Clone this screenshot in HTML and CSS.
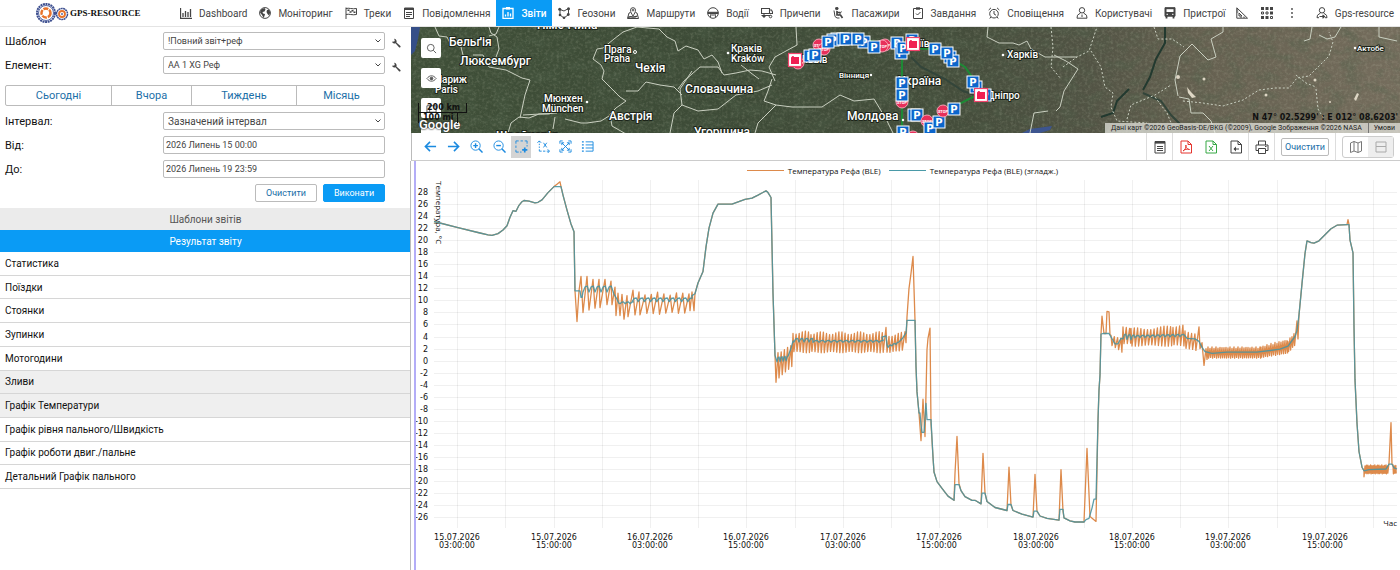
FILE: index.html
```html
<!DOCTYPE html>
<html lang="uk">
<head>
  <meta charset="UTF-8" />
  <meta name="viewport" content="width=device-width, initial-scale=1.0" />
  <title>GPS-RESOURCE - Звіти</title>
  <link rel="stylesheet" href="styles.css">
</head>
<body>
  <header class="topbar">
    <a class="logo" href="#">
      <svg width="34" height="22" viewBox="0 0 34 22" fill="none">
        <circle cx="11" cy="11" r="9" stroke="#3d4f8f" stroke-width="2" stroke-dasharray="2 .6"/>
        <circle cx="11" cy="11" r="7.500" stroke="#5a6aa5" stroke-width="1"/>
        <circle cx="11" cy="11" r="4.500" stroke="#e8732c" stroke-width="2.500" stroke-dasharray="5 1"/>
        <circle cx="27" cy="12" r="5.500" stroke="#3d4f8f" stroke-width="1.500" stroke-dasharray="2 .4"/>
        <circle cx="27" cy="12" r="3" stroke="#e8732c" stroke-width="1.800"/>
        <circle cx="27" cy="12" r="1" fill="#5a6aa5"/>
      </svg>
      <span>GPS-RESOURCE</span>
    </a>
    <nav class="menu">
      <a href="#"><svg class="ico" viewBox="0 0 12 12"><path d="M.5 1v10.500H12M3 10V6M5.500 10V4M8 10V5M10.500 10V2" stroke-width="1.300"/></svg>Dashboard</a>
      <a href="#"><svg class="ico" viewBox="0 0 12 12"><circle cx="6" cy="6" r="5.400"/><path d="M2 2.500 5.500 1l1 1.500-1 2-2 .5.5 1.500 2 .5-.5 2L4.500 11 3 8 1 5.500zM8 3l2-.5 1.300 3L10 8.500 8.500 7 7.500 5z" fill="#444" stroke="none"/></svg>Моніторинг</a>
      <a href="#"><svg class="ico" viewBox="0 0 12 12"><path d="M1 .5V12M1 1.500c3-1 6 1 10.500 0v6C7 8.500 4 6.500 1 7.500"/><path d="M2.500 2.500h2v1.500h-2zM6.500 3h2v1.500h-2zM4.500 4.300h2v1.500h-2zM8.500 4.500h2V6h-2z" fill="#444" stroke="none"/></svg>Треки</a>
      <a href="#"><svg class="ico" viewBox="0 0 12 12"><path d="M1.500 1h9v10.500h-9z"/><path d="M1.500 2h9" stroke-width="2"/><path d="M3 5.500h6M3 7.500h6M3 9.500h4"/></svg>Повідомлення</a>
      <a href="#" class="active"><svg class="ico" viewBox="0 0 12 12"><path d="M1 1.500h10v10H1z" stroke-width="1.300"/><path d="M4 0h4v2.500H4z" fill="#fff" stroke="none"/><path d="M3.500 9.500v-2M6 9.500V5M8.500 9.500V6.500" stroke-width="1.300"/></svg>Звіти</a>
      <a href="#"><svg class="ico" viewBox="0 0 12 12"><path d="M2 2.500 6 4l4.500-2.500v6L6 11 2 8z"/><g fill="#444" stroke="none"><circle cx="1.700" cy="2.200" r="1.500"/><circle cx="10.500" cy="1.700" r="1.500"/><circle cx="10.300" cy="7.500" r="1.400"/><circle cx="6" cy="10.700" r="1.300"/><circle cx="2" cy="8" r="1.300"/></g></svg>Геозони</a>
      <a href="#"><svg class="ico" viewBox="0 0 12 12"><path d="M3.500 5.500 2 6 .5 11.500h11L10 6l-1.500-.5"/><path d="M6 9C4.500 6.500 3.500 5 3.500 3.200a2.500 2.500 0 0 1 5 0C8.500 5 7.500 6.500 6 9z"/><path d="M1 10.500c3-2 6 1 9-1.500" stroke-width="1.500"/><circle cx="6" cy="3.200" r=".8"/></svg>Маршрути</a>
      <a href="#"><svg class="ico" viewBox="0 0 12 12"><circle cx="6" cy="6" r="5.300"/><path d="M1 5.300h10v1.200H1z" fill="#444"/><path d="M4 6.500 3.500 10M8 6.500 8.500 10M4.500 8h3"/></svg>Водії</a>
      <a href="#"><svg class="ico" viewBox="0 0 12 12"><path d="M.5 1.500h8v5h-8zM8.500 3h2l1 2v1.500h-3M.5 8.500h9" stroke-width="1.100"/><circle cx="3" cy="9" r="1.200" fill="#444"/><circle cx="9.500" cy="9.500" r="1.300"/></svg>Причепи</a>
      <a href="#"><svg class="ico" viewBox="0 0 12 12"><circle cx="3.800" cy="1.500" r="1.300" fill="#444"/><path d="M4 4v4h3.500l2 3M4.500 5.500h3" stroke-width="1.700"/><path d="M1 3.500 2 9.500 4 11h2.500M8.500 4.500l-3 4"/></svg>Пасажири</a>
      <a href="#"><svg class="ico" viewBox="0 0 12 12"><path d="M1.500 1.500h9v10h-9zM4 6.500 5.500 8 8.500 5"/><path d="M4 .3h4v2.400H4z" fill="#444" stroke="none"/></svg>Завдання</a>
      <a href="#"><svg class="ico" viewBox="0 0 12 12"><circle cx="6" cy="6.700" r="4.300"/><path d="M6 4v3l2 1.200M.7 3 3 .8M11.300 3 9 .8M2.800 10 1.800 11.500M9.200 10l1 1.500"/></svg>Сповіщення</a>
      <a href="#"><svg class="ico" viewBox="0 0 12 12"><circle cx="6" cy="3.300" r="2.700"/><path d="M4.500 6 1.500 8.200l-.5 3h10l-.5-3L7.500 6M6 7.500v2.500"/></svg>Користувачі</a>
      <a href="#"><svg class="ico" viewBox="0 0 12 12"><path d="M1 .7h10v8.500H1z" fill="#444"/><path d="M2.500 2.200h7V5h-7z" fill="#fff" stroke="none"/><path d="M2.500 9v2.500M9.500 9v2.500" stroke-width="1.800"/><path d="M2.500 7.300h1.500M8 7.300h1.500" stroke="#fff"/></svg>Пристрої</a>
    </nav>
    <div class="tools">
      <button type="button" aria-label="Інструменти"><svg class="ico" viewBox="0 0 12 12"><path d="M.8.800v10.400h10.700zM3 6v3h3z"/><path d="M.8 3h1.500M.8 5h1.500M5 11V9.500M8 11V9.500"/></svg></button>
      <button type="button" aria-label="Додатки"><svg class="ico" viewBox="0 0 12 12"><g fill="#444" stroke="none"><path d="M0 0h3v3H0zM4.500 0h3v3h-3zM9 0h3v3H9zM9 4.500h3v3H9zM0 9h3v3H0zM4.500 9h3v3h-3z"/></g><path d="M.5 5h2v2h-2zM5 5h2v2H5zM9.500 9.500h2v2h-2z"/></svg></button>
      <button type="button" aria-label="Ще"><svg class="ico" viewBox="0 0 12 12"><g fill="#444" stroke="none"><circle cx="6" cy="2" r=".9"/><circle cx="6" cy="6" r=".9"/><circle cx="6" cy="10" r=".9"/></g></svg></button>
    </div>
    <a class="account" href="#"><svg class="ico" viewBox="0 0 12 12"><circle cx="6" cy="3.300" r="2.700"/><path d="M4.500 6 1.500 8.200l-.5 2.500h2M7.500 6l3 2.200.5 2.500H9"/><path d="M3.500 9.500h5M6.500 8l2 1.500-2 1.800" stroke-width="1.200"/></svg>Gps-resource</a>
  </header>

  <div class="layout">
    <aside class="sidebar">
      <form class="report-form">
        <div class="field">
          <label for="template">Шаблон</label>
          <div class="select">
            <select id="template"><option>!Повний звіт+реф</option></select>
            <svg viewBox="0 0 8 8"><path d="M1.500 2.500 4 5l2.500-2.500"/></svg>
          </div>
          <button type="button" class="wrench" aria-label="Налаштувати шаблон"><svg viewBox="0 0 10 10"><path d="M1 3.800A2.600 2.600 0 0 0 4.500 5.200L8 9.300a1 1 0 0 0 1.400-1.400L5.400 4.500A2.600 2.600 0 0 0 3 .8l.8 1.500-.5 1.200z"/></svg></button>
        </div>
        <div class="field">
          <label for="unit">Елемент:</label>
          <div class="select">
            <select id="unit"><option>АА 1 XG Реф</option></select>
            <svg viewBox="0 0 8 8"><path d="M1.500 2.500 4 5l2.500-2.500"/></svg>
          </div>
          <button type="button" class="wrench" aria-label="Налаштувати елемент"><svg viewBox="0 0 10 10"><path d="M1 3.800A2.600 2.600 0 0 0 4.500 5.200L8 9.300a1 1 0 0 0 1.400-1.400L5.400 4.500A2.600 2.600 0 0 0 3 .8l.8 1.500-.5 1.200z"/></svg></button>
        </div>
        <div class="periods">
          <button type="button">Сьогодні</button>
          <button type="button">Вчора</button>
          <button type="button">Тиждень</button>
          <button type="button">Місяць</button>
        </div>
        <div class="field">
          <label for="interval">Інтервал:</label>
          <div class="select">
            <select id="interval"><option>Зазначений інтервал</option></select>
            <svg viewBox="0 0 8 8"><path d="M1.500 2.500 4 5l2.500-2.500"/></svg>
          </div>
        </div>
        <div class="field">
          <label for="from">Від:</label>
          <input type="text" id="from" value="2026 Липень 15 00:00" />
        </div>
        <div class="field">
          <label for="to">До:</label>
          <input type="text" id="to" value="2026 Липень 19 23:59" />
        </div>
        <div class="actions">
          <button type="reset" class="btn">Очистити</button>
          <button type="button" class="btn primary">Виконати</button>
        </div>
      </form>
      <button type="button" class="section">Шаблони звітів</button>
      <button type="button" class="section current">Результат звіту</button>
      <ul class="results">
        <li><a href="#">Статистика</a></li>
        <li><a href="#">Поїздки</a></li>
        <li><a href="#">Стоянки</a></li>
        <li><a href="#">Зупинки</a></li>
        <li><a href="#">Мотогодини</a></li>
        <li class="on"><a href="#">Зливи</a></li>
        <li class="on"><a href="#">Графік Температури</a></li>
        <li><a href="#">Графік рівня пального/Швидкість</a></li>
        <li><a href="#">Графік роботи двиг./пальне</a></li>
        <li><a href="#">Детальний Графік пального</a></li>
      </ul>
    </aside>

    <main class="content">
      <div class="map">
        <svg class="map-canvas" viewBox="0 0 989 106" preserveAspectRatio="xMidYMid slice">
          <defs>
            <linearGradient id="land">
              <stop offset="0" stop-color="#3f4f38"/>
              <stop offset=".3" stop-color="#3d4b37"/>
              <stop offset=".55" stop-color="#444d3b"/>
              <stop offset=".68" stop-color="#515344"/>
              <stop offset=".8" stop-color="#666151"/>
              <stop offset="1" stop-color="#756d5d"/>
            </linearGradient>
            <filter id="relief" x="0" y="0" width="100%" height="100%">
              <feTurbulence type="fractalNoise" baseFrequency=".06 .09" numOctaves="5" seed="8"/>
              <feColorMatrix values="0 0 0 0 .08  0 0 0 0 .12  0 0 0 0 .07  1.800 0 0 0 -.72"/>
            </filter>
            <filter id="grain" x="0" y="0" width="100%" height="100%">
              <feTurbulence type="fractalNoise" baseFrequency=".35" numOctaves="3" seed="3"/>
              <feColorMatrix values="0 0 0 0 .7  0 0 0 0 .72  0 0 0 0 .55  0 1.200 0 0 -.52"/>
            </filter>
            <g id="park">
              <rect x="-6" y="-6" width="12" height="12" fill="#0b66cc" stroke="#fff" stroke-width="1"/>
              <text class="park" x="0" y="4">P</text>
            </g>
            <g id="stop">
              <circle r="6" fill="#e8305a" stroke="#f7a0b4"/>
              <text class="stop" x="0" y="2">STOP</text>
            </g>
            <g id="fuel">
              <rect x="-6.500" y="-6.500" width="13" height="13" fill="#fff" stroke="#f2446c" stroke-width="1.200"/>
              <path d="M-4-2.500-2.500-4h1l.5 1H4v7h-8z" fill="#f01f52"/>
            </g>
          </defs>
          <rect width="989" height="106" fill="url(#land)"/>
          <rect width="989" height="106" filter="url(#relief)" opacity=".5"/>
          <rect width="989" height="106" filter="url(#grain)" opacity=".3"/>
          <path d="M0 0h9L7 12 4 24 0 28z" fill="#354f88"/>
          <path d="M611 106l8-4 22-3-2 4-10 3z" fill="#3d558f"/>
          <path class="river" d="M754 0v16l-9 16-6 18-7 13M718 62l-12 12-4 12-12 4"/>
          <path class="river faint" d="M500 30l10 10 24 12 18 12 12 4M732 66l18 8 10 14 14 14"/>
          <g fill="#ddd6c4"><circle cx="767" cy="50" r="2"/><circle cx="793" cy="52" r="1.500"/><circle cx="904" cy="53" r="1.500"/><path d="M776 60l4 5 5 5-4 1-4-5zM943 72l3-6 2 1-3 7z"/><circle cx="855" cy="68" r="1.500"/><circle cx="919" cy="75" r="1"/></g>
          <g class="border">
            <path d="M24 0l4 9 8 1 4 8M78 0l2 6 6 4 2 12-3 8M88 0l-3 7-7 2M50 20l2 8M62 28l10 0 6 12 17 3 16 8 8 2-5 15-3 14-2 9"/>
            <path d="M108 90l10 1 10-4 10 0 6-2M108 90l-8 6-3 10M144 90l-2 12M154 92l16 4 6 0 14-2 8-5M112 88l34-2"/>
            <path d="M212 5l-9 7-11 9-6 1-4 10 8 6 3 6-2 8 8 8 10 10 6 4-10 7-6 6 2 12 14 8"/>
            <path d="M212 5l14-5 22 2 8 8 8 4 3 10 8-5 12 4 6 9 8-4 6 7 4 11M215 64l12 0 8-9 14 3 14 2 8 8M267 62l6-8 16-14 18 0 6 8 12-2 14-3 12 1 14 4"/>
            <path d="M271 78l-2-16 12-18M271 78l-8 8-4 20M271 78l16 6 20-2 18-14 22-4 14-6M330 38l10 8 8 6M364 54l-6-14 6-10 22-12-1-18M361 52l-4 12-4 10 12 4-10 10-8 8-3 10M365 78l16 2 30 0 18-12 14 6 20-2 12 20 7 14"/>
            <path d="M577 0l-1 10 12 6 14 0 6 2 8-4 4 8 14 8 20 0 12 0M645 84l4-4 4-16 14-22-12-8-12-6M637 84l-14 2-4 20"/>
            <path d="M767 69l-3-16 5-24 12-12 16 16 8-3-5-18 12-7V0M768 70l10 2 2 14 12 0 8 8 4 12M901 0l-2 12-6 2M968 0v10l18 4M908 8l8 4 8-2 6-10"/>
          </g>
          <g class="border dotted">
            <path d="M640 0l2 20-2 20 10 12M652 40l14-10 12-6 8-24M680 24l10 16 4 20 8 6-2 14 6 14 30 2"/>
            <path d="M743 0l4 12 14 0 12 8M716 92l4-14 24-10 16-10M744 70l12 16 4 10M772 74l20 2 20 3 20-6 16-10 16-2 14 0 8-10 12-2 20-20 4-14-4-10M885 48l10 8 10 4M905 62l2 20 6 10"/>
          </g>
          <path class="track" d="M384 33l20-5 14-13 30-4 42 10 34 1 20 12 10 6 10 14 6 12-28 14-14 12-14 6M491 24v80"/>
          <g class="place big">
            <text x="126" y="2">Німеччина</text>
            <text x="38" y="19">Бельґія</text>
            <text x="49" y="38">Люксембург</text>
            <text x="224" y="45">Чехія</text>
            <text x="198" y="93">Австрія</text>
            <text x="274" y="66">Словаччина</text>
            <text x="283" y="109">Угорщина</text>
            <text x="85" y="113">Швейцарія</text>
            <text x="487" y="58">Україна</text>
            <text x="436" y="93">Молдова</text>
          </g>
          <g class="place">
            <text x="24" y="56">Париж</text>
            <text x="24" y="66">Paris</text>
            <text x="193" y="26">Прага</text>
            <text x="193" y="35">Praha</text>
            <text x="133" y="75">Мюнхен</text>
            <text x="131" y="85">München</text>
            <text x="320" y="25">Краків</text>
            <text x="320" y="35">Kraków</text>
            <text x="390" y="36">Львів</text>
            <text x="498" y="20">Київ</text>
            <text x="596" y="31">Харків</text>
            <text x="576" y="72">Дніпро</text>
          </g>
          <g class="place small">
            <text x="428" y="51">Вінниця</text>
            <text x="946" y="24">Актобе</text>
          </g>
          <g fill="#fff"><circle cx="224" cy="25" r="1.500" fill="none" stroke="#fff"/><circle cx="176" cy="75" r="1.300"/><circle cx="317" cy="26" r="1.300"/><circle cx="460" cy="48" r="1.200"/><circle cx="592" cy="28" r="1.300"/><circle cx="944" cy="21" r="1.200"/><circle cx="492" cy="93" r="1.200"/></g>
          <use href="#stop" x="387" y="36"/><use href="#fuel" x="384" y="33"/>
          <use href="#stop" x="408" y="18"/><use href="#stop" x="413" y="22"/>
          <use href="#park" x="399" y="29"/><use href="#park" x="404" y="28"/>
          <use href="#park" x="426" y="12"/><use href="#park" x="422" y="13"/><use href="#park" x="417" y="15"/>
          <use href="#park" x="432" y="12"/><use href="#park" x="435" y="12"/>
          <use href="#park" x="453" y="15"/><use href="#park" x="447" y="12"/>
          <use href="#stop" x="474" y="18"/><use href="#stop" x="471" y="19"/><use href="#park" x="463" y="20"/>
          <use href="#park" x="486" y="16"/><use href="#park" x="490" y="26"/><use href="#park" x="492" y="21"/>
          <use href="#park" x="501" y="13"/><use href="#fuel" x="502" y="17"/>
          <use href="#park" x="524" y="22"/><use href="#park" x="539" y="30"/><use href="#park" x="542" y="34"/><use href="#park" x="536" y="26"/>
          <use href="#park" x="565" y="60"/><use href="#park" x="562" y="55"/>
          <use href="#park" x="574" y="68"/><use href="#fuel" x="570" y="68"/>
          <use href="#stop" x="491" y="75"/><use href="#park" x="491" y="56"/><use href="#park" x="491" y="68"/>
          <use href="#park" x="503" y="88"/><use href="#park" x="506" y="88"/>
          <use href="#stop" x="516" y="94"/><use href="#park" x="519" y="101"/><use href="#park" x="528" y="95"/>
          <use href="#stop" x="532" y="84"/><use href="#park" x="543" y="82"/>
          <use href="#stop" x="502" y="110"/><use href="#park" x="492" y="105"/>
        </svg>
        <div class="map-controls">
          <button type="button" aria-label="Пошук"><svg viewBox="0 0 12 12"><circle cx="5.200" cy="5.200" r="3.700"/><path d="M8 8l3 3"/></svg></button>
          <button type="button" aria-label="Видимість"><svg viewBox="0 0 12 12"><path d="M1 6c3-4 7-4 10 0-3 4-7 4-10 0z"/><circle cx="6" cy="6" r="1.500" fill="#555"/></svg></button>
          <button type="button" aria-label="Шари"><svg viewBox="0 0 12 12"><path d="M1 3h10v7H1zM4 3v7"/></svg></button>
          <button type="button" aria-label="Збільшити"><svg viewBox="0 0 12 12"><path d="M6 1v10M1 6h10"/></svg></button>
        </div>
        <span class="google">Google</span>
        <div class="scale"><span class="km">200 km</span><span class="mi">100 mi</span></div>
        <div class="cursor-pos">N 47° 02.5299' : E 012° 08.6203'</div>
        <div class="copyright"><span>Дані карт ©2026 GeoBasis-DE/BKG (©2009), Google Зображення ©2026 NASA</span><a href="#">Умови</a></div>
      </div>

      <div class="toolbar">
        <div class="zoomers">
          <div class="group">
            <button type="button" aria-label="Назад"><svg viewBox="0 0 14 14"><path d="M13 7H2M6.500 2 1.500 7l5 5" stroke-width="1.700"/></svg></button>
            <button type="button" aria-label="Вперед"><svg viewBox="0 0 14 14"><path d="M1 7h11M7.500 2l5 5-5 5" stroke-width="1.700"/></svg></button>
            <button type="button" aria-label="Наблизити"><svg viewBox="0 0 14 14"><circle cx="6" cy="6" r="5"/><path d="M9.500 9.500 13.500 13.500" stroke-width="1.600"/><path d="M3.500 6h5M6 3.500v5" stroke-width="1.500"/></svg></button>
            <button type="button" aria-label="Віддалити"><svg viewBox="0 0 14 14"><circle cx="6" cy="6" r="5"/><path d="M9.500 9.500 13.500 13.500" stroke-width="1.600"/><path d="M3.500 6h5" stroke-width="1.500"/></svg></button>
          </div>
          <div class="group">
            <button type="button" class="pressed" aria-label="Виділення"><svg viewBox="0 0 14 14"><path d="M1 4V1h3M6 1h2.500M10.500 1H13v3M13 5.500V7M1 6v2.500M1 10.500V13h3M5.500 13H7"/><path d="M10.500 8v5.500M7.700 10.700h5.600" stroke-width="1.800"/></svg></button>
            <button type="button" aria-label="Вісь X"><svg viewBox="0 0 14 14"><path d="M2.500 1v1.500M2.500 4v1.500M2.500 7v1.500M2.500 10v2H5M6.500 12H9M10.500 12H13M.5 3l2-2 2 2M11.500 10l2 2-2 2M7 3l3.500 5M10.500 3 7 8"/></svg></button>
          </div>
          <div class="group">
            <button type="button" aria-label="На весь екран"><svg viewBox="0 0 14 14"><path d="M1 4V1h3M10 1h3v3M13 10v3h-3M4 13H1v-3"/><path d="M3 3l8 8M11 3l-8 8M3 5.500V3h2.500M8.500 3H11v2.500M11 8.500V11H8.500M5.500 11H3V8.500"/></svg></button>
            <button type="button" aria-label="Легенда"><svg viewBox="0 0 14 14"><path d="M5 2h8M5 5.300h8M5 8.600h8M5 12h8M13 2v10"/><path d="M1 2h2M1 5.300h2M1 8.600h2M1 12h2" stroke-width="1.500"/></svg></button>
          </div>
        </div>
        <div class="cell"><button type="button" aria-label="Таблиця"><svg viewBox="0 0 14 14"><path d="M2 1.500h10v11.500H2z"/><path d="M2 2.500h10" stroke-width="2.200"/><path d="M4 6.500h6M4 8.500h6M4 10.500h6"/></svg></button></div>
        <div class="cell">
          <button type="button" class="red" aria-label="PDF"><svg viewBox="0 0 14 14"><path d="M2 1h7l3.500 3.500V13H2zM9 1v3.500h3.500M4 11c2-1 3.500-4 3-6-1 1 1 4.500 3.500 4.500C8 8.500 5.500 9.500 4 11z"/></svg></button>
          <button type="button" class="green" aria-label="Excel"><svg viewBox="0 0 14 14"><path d="M2 1h7l3.500 3.500V13H2zM9 1v3.500h3.500M5 6l4 5M9 6l-4 5"/></svg></button>
          <button type="button" aria-label="Експорт"><svg viewBox="0 0 14 14"><path d="M9 1H2v12h10.500V4.500L9 1v3.500h3.500M10 9H5"/><path d="M7 6.500 4.500 9 7 11.500z" fill="#444" stroke="none"/></svg></button>
        </div>
        <div class="cell"><button type="button" aria-label="Друк"><svg viewBox="0 0 14 14"><path d="M3.500 5V1h7v4M3.500 10.500H1V5h12v5.500h-2.500M3.500 8.500h7v5h-7zM10 6.500h1.500"/></svg></button></div>
        <div class="cell wide"><button type="button" class="btn">Очистити</button></div>
        <div class="cell wide">
          <div class="switch">
            <button type="button" aria-label="Карта"><svg viewBox="0 0 14 14"><path d="M1.500 3 5 1.500 9 3l3.500-1.500V11L9 12.500 5 11l-3.500 1.500zM5 1.500V11M9 3v9.500"/></svg></button>
            <button type="button" class="pressed" aria-label="Розділити"><svg viewBox="0 0 14 14"><path d="M2 2h10v4.500H2zM2 6.500h10V12H2z"/></svg></button>
          </div>
        </div>
      </div>

      <section class="chart">
        <div class="legend">
          <span><i class="line raw"></i>Температура Рефа (BLE)</span>
          <span><i class="line smooth"></i>Температура Рефа (BLE) (згладж.)</span>
        </div>
        <div class="plot" id="plot"></div>
      </section>
    </main>
  </div>
  <script src="chart.js"></script>
</body>
</html>
```
FILE: styles.css
```css
* {
  box-sizing: border-box;
}
body {
  margin: 0;
  min-height: 100vh;
  display: flex;
  flex-direction: column;
  font-family: Roboto, "Liberation Sans", sans-serif;
  font-size: 10px;
  color: #222;
  background: #fff;
}
button,
input,
select {
  font-family: inherit;
  font-size: 9px;
  margin: 0;
}
button {
  padding: 0;
  border: 0;
  background: none;
  cursor: pointer;
}
a {
  color: inherit;
  text-decoration: none;
}
svg {
  display: block;
  fill: none;
}

/* top bar */
.topbar {
  display: flex;
  align-items: stretch;
  height: 27px;
  border-bottom: 1px solid #e4e4e4;
  color: #444;
  white-space: nowrap;
}
.logo {
  display: flex;
  flex-shrink: 0;
  align-items: center;
  gap: 1px;
  width: 174px;
  padding-left: 35px;
  font-family: "Liberation Serif", serif;
  font-weight: bold;
  font-size: 9px;
  color: #111;
}
.menu {
  display: flex;
}
.menu a,
.account {
  display: flex;
  align-items: center;
  gap: 7px;
  padding: 0 6px;
}
.menu .active {
  background: #0a9bf5;
  color: #fff;
  font-weight: 500;
}
.ico {
  width: 12px;
  height: 12px;
  stroke: #444;
}
.active .ico {
  stroke: #fff;
}
.tools {
  display: flex;
  align-items: center;
  gap: 13px;
  padding: 0 4px;
}
.account {
  margin-left: auto;
}

.layout {
  flex: 1;
  display: grid;
  grid-template-columns: 411px minmax(0, 1fr);
}

/* sidebar */
.report-form {
  display: flex;
  flex-direction: column;
  gap: 6px;
  padding: 5px 5px 6px;
}
.field {
  display: grid;
  grid-template-columns: 158px 222px 16px;
  align-items: center;
}
.field label {
  color: #111;
  font-size: 11px;
}
.select {
  position: relative;
}
.select select,
.field input {
  display: block;
  width: 100%;
  height: 18px;
  padding: 0 4px;
  border: 1px solid #bbb;
  border-radius: 2px;
  background: #fff;
  color: #444;
  appearance: none;
}
.select #interval {
  font-size: 10px;
}
.field input {
  padding: 0 2px;
}
.select svg {
  position: absolute;
  right: 3px;
  top: 5px;
  width: 8px;
  height: 8px;
  stroke: #444;
}
.wrench {
  justify-self: end;
  margin-top: 3px;
}
.wrench svg {
  width: 10px;
  height: 10px;
  fill: #444;
}
.periods {
  display: grid;
  grid-template-columns: 105px 80px 105px 90px;
  width: 380px;
  margin: 5px 0 0;
  border: 1px solid #bbb;
  border-radius: 2px;
}
.periods button {
  height: 19px;
  font-size: 11px;
  color: #1b6fa8;
}
.periods button + button {
  border-left: 1px solid #bbb;
}
.actions {
  display: flex;
  justify-content: flex-end;
  gap: 6px;
  padding-right: 21px;
}
.btn {
  height: 18px;
  border: 1px solid #bbb;
  border-radius: 2px;
  background: #fff;
  color: #1b6fa8;
}
.actions .btn {
  width: 62px;
}
.actions .primary {
  border-color: #0a9bf5;
  background: #0a9bf5;
  color: #fff;
}
.section {
  display: block;
  width: 100%;
  height: 22px;
  background: #ebebeb;
  color: #555;
  font-size: 10px;
}
.section.current {
  background: #0a9bf5;
  color: #fff;
}
.results {
  display: grid;
  grid-auto-rows: 1fr;
  height: 237px;
  margin: 0;
  padding: 0;
  list-style: none;
}
.results li {
  display: flex;
  align-items: center;
  padding: 0 5px;
  border-bottom: 1px solid #d6d6d6;
  color: #111;
}
.results .on {
  background: #efefef;
}

/* map */
.content {
  display: flex;
  flex-direction: column;
}
.map {
  position: relative;
  height: 106px;
  overflow: hidden;
}
.map-canvas {
  width: 100%;
  height: 100%;
}
.border {
  stroke: #c9cfc0;
  stroke-width: 1;
  stroke-linejoin: round;
}
.dotted {
  stroke-dasharray: 2 2;
}
.river {
  stroke: #22392f;
  stroke-width: 2;
}
.faint {
  stroke: #33453a;
}
.track {
  stroke: #1d8a35;
  stroke-width: 2;
}
.place {
  font-size: 10px;
  font-weight: 500;
  fill: #fff;
  stroke: #1c2419;
  stroke-width: 2px;
  stroke-linejoin: round;
  paint-order: stroke;
}
.big {
  font-size: 12px;
}
.small {
  font-size: 8px;
}
.park {
  font: bold 10px "DejaVu Sans", sans-serif;
  fill: #fff;
  text-anchor: middle;
}
.stop {
  font: bold 4px Roboto, sans-serif;
  fill: #fff;
  text-anchor: middle;
}
.map-controls {
  position: absolute;
  left: 10px;
  top: 11px;
  display: grid;
  gap: 10px;
}
.map-controls button {
  display: grid;
  place-items: center;
  width: 20px;
  height: 20px;
  border-radius: 2px;
  background: #fff;
}
.map-controls svg {
  width: 11px;
  height: 11px;
  stroke: #555;
}
.google {
  position: absolute;
  left: 8px;
  bottom: 1px;
  font-size: 13px;
  line-height: 14px;
  font-weight: 500;
  color: #fff;
  text-shadow: 0 0 2px #333, 0 0 2px #333;
}
.scale {
  position: absolute;
  left: 7px;
  top: 76px;
  width: 49px;
  font: bold 8px/10px "DejaVu Sans", sans-serif;
  color: #111;
}
.scale span {
  display: block;
  height: 10px;
  padding-left: 8px;
  border: solid #111;
  border-width: 0 1px;
}
.scale .km {
  border-bottom-width: 1px;
}
.scale .mi {
  width: 40px;
  padding-left: 4px;
}
.cursor-pos {
  position: absolute;
  right: 2px;
  top: 86px;
  font: bold 8px/10px "DejaVu Sans", sans-serif;
  color: #111;
}
.copyright {
  position: absolute;
  right: 0;
  bottom: 0;
  display: flex;
  height: 10px;
  font-size: 7px;
  line-height: 10px;
  color: #222;
  background: rgba(235, 235, 230, 0.7);
}
.copyright span {
  padding: 0 6px;
  border-right: 1px solid #777;
}
.copyright a {
  padding: 0 5px;
}

/* report toolbar */
.toolbar {
  display: flex;
  height: 28px;
  border-bottom: 1px solid #ccc;
  border-left: 1px solid #bbb;
}
.zoomers {
  flex: 1;
  display: flex;
  align-items: center;
  gap: 2px;
  padding-left: 8px;
}
.group {
  display: flex;
  gap: 2px;
}
.group:first-child {
  gap: 3px;
}
.group button,
.cell button {
  display: grid;
  place-items: center;
}
.group button {
  width: 20px;
  height: 22px;
}
.group svg {
  width: 13px;
  height: 13px;
  stroke: #1b8ae0;
}
.group .pressed {
  background: #d4d4d4;
}
.cell {
  display: flex;
  align-items: center;
  border-left: 1px solid #ddd;
}
.cell > button {
  width: 25px;
  height: 27px;
}
.cell svg {
  width: 14px;
  height: 14px;
  stroke: #444;
}
.cell .red svg {
  stroke: #e5352e;
}
.cell .green svg {
  stroke: #36a845;
}
.cell.wide {
  padding: 0 6px;
}
.wide > .btn {
  width: 48px;
  height: 18px;
}
.switch {
  display: flex;
  border: 1px solid #ccc;
  border-radius: 3px;
}
.switch button {
  width: 25px;
  height: 20px;
}
.switch .pressed {
  background: #eee;
}
.switch svg {
  stroke: #777;
}
.switch .pressed svg {
  stroke: #aaa;
}

/* chart */
.chart {
  flex: 1;
  display: flex;
  flex-direction: column;
  margin-left: 3px;
  border-left: 2px solid #b3adf7;
  box-shadow: -3px 0 0 #fff, -4px 0 0 #bbb;
  font-family: "DejaVu Sans", sans-serif;
  font-size: 8px;
  color: #111;
}
.legend {
  display: flex;
  justify-content: center;
  gap: 8px;
  height: 19px;
  padding-right: 11px;
  font-family: "Open Sans", "Noto Sans", sans-serif;
  font-weight: 500;
  line-height: 18px;
}
.legend span {
  display: flex;
  align-items: center;
  gap: 4px;
}
.line {
  width: 37px;
  height: 1px;
}
.line.raw {
  background: #dd8a4b;
}
.line.smooth {
  background: #4a9aa8;
}
.plot {
  flex: 1;
  min-height: 390px;
}
.plot text {
  fill: #111;
}
.plot .title {
  font-family: "Open Sans", "Noto Sans", sans-serif;
  font-weight: 500;
}
.grid {
  stroke: #000;
  stroke-opacity: 0.06;
}
.series {
  stroke-width: 1.3px;
  stroke-linejoin: round;
}
.series.raw {
  stroke: #dd8a4b;
}
.series.smooth {
  stroke: #4a93a0;
  stroke-opacity: 0.9;
}
```
FILE: chart.js
```js
// time runs from 15.07 00:00 to 20.07 00:00, one step = 1/964 of the period
const STEPS = 964;
const TOP = 30;
const BOTTOM = -27.8;

// saw between hi and lo, both going linearly from start to end
function wave(x0, x1, period, hi0, lo0, hi1, lo1) {
  const out = [];
  for (let x = x0; x < x1; x += period) {
    const t = (x - x0) / (x1 - x0);
    const hi = hi0 + ((hi1 ?? hi0) - hi0) * t;
    const lo = lo0 + ((lo1 ?? lo0) - lo0) * t;
    const k = (Math.sin(x * 1.7) + 1) * 0.07 * (hi - lo);
    out.push([x, hi - k], [x + period * 0.3, lo + k * 0.5]);
  }
  return out;
}

// slowly drifting average with small steps
function drift(x0, x1, v0, v1, amp, period) {
  const out = [];
  for (let x = x0; x < x1; x += period) {
    const v = v0 + (v1 - v0) * (x - x0) / (x1 - x0);
    out.push([x, v - amp], [x + period * 0.35, v + amp * 0.7], [x + period * 0.7, v + amp]);
  }
  return out;
}

const start = [[1, 23.1], [25, 22.1], [47, 21.2], [55, 20.9], [59, 20.8], [65, 21.1], [70, 21.7], [74, 22.4], [77, 23.8], [80, 24.9], [83, 24.8], [86, 25.8], [89, 26.4], [91, 26.6], [96, 26.5], [102, 26.2], [105, 26.3], [109, 26.7], [115, 27.9], [121, 28.9]];
const fall1 = [[128, 28.9], [130, 27.5], [134, 25], [138, 22.7], [141, 21.4], [142, 11.6]];
const rise1 = [[265, 12.9], [270, 14.8], [273, 18.9], [276, 22], [280, 24.5], [285, 26], [299, 26], [312, 26.8], [319, 27], [325, 27.5], [333, 28.2], [335, 27.9], [338, 27.1], [340, 11.2], [342, 0.9]];
const fall2 = [[482, 6.7], [483, -1], [484, -5.2], [486, -8.7]];
const cool = [
  [[500, -16], [501, -18.5], [504, -20.1], [509, -21.2], [515, -22.5], [521, -23.2]],
  [[528, -21.6], [532, -22.6], [539, -23.2], [542, -23.2], [548, -23.8]],
  [[554, -23.4], [562, -24.4], [574, -24.9]],
  [[580, -24.9], [589, -25.5], [600, -26]],
  [[607, -25.8], [614, -26.2], [626, -26.5]],
  [[631, -26.1], [637, -26.6], [642, -26.8], [651, -26.8]]
];
const rise2 = [[665, -9.9], [666, -4.9], [667, -2.4], [668, 4.4]];
const last = [[866, 7.6], [869, 12.8], [872, 17.8], [874, 19.9], [878, 19.6], [881, 19.5], [886, 19.9], [892, 20.9], [898, 21.9], [904, 22.5], [914, 22.6]];
const fall3 = [[916, 22.6], [917, 20], [920, 17.9], [921, 5.6], [922, -3.2], [924, -10.4], [926, -15.1], [929, -17.7], [931, -18.3]];

const raw = [
  ...start, [124, 29.3], [127, 29.7],
  ...fall1, [144, 6.5], [146, 11.6], [148, 14], [150, 8], [154, 14], [156, 8.4], [160, 13.5], [162, 8.7], [166, 13.5], [167, 8.8],
  [172, 13.5], [174, 9.3], [178, 13.2], [179, 9.3], [182, 12.2], [183, 7.5], [185, 11.2], [187, 7.5], [189, 11], [191, 6.9],
  [194, 10.8], [195, 7.3], [200, 11.7], [202, 7.6], [206, 11.4], [207, 7.6],
  ...wave(212, 256, 6.3, 11.4, 7.6, 11.3, 7.9), [256, 11.1], [257, 8.3], [259, 11.4], [261, 8.3], [262, 11.2],
  ...rise1, [343, -3.6],
  ...wave(345, 360, 3.2, 2, -3.2, 2.6, -0.6),
  ...wave(360, 378, 3.1, 4.9, 1.3), ...wave(378, 450, 3.1, 4.8, 1.3), [453, 5.5], [454, 1.4],
  ...wave(456, 470, 3.1, 4.4, 1.2, 4.7, 1.8), [472, 4.8], [473, 3],
  [474, 7.3], [476, 12], [478, 14.5], [480, 17.3],
  ...fall2, [488, -13.3], [490, -6.4], [492, -12.6], [494, 1.8], [495, 3.7], [497, 5.4], [498, -10.5],
  ...cool[0], [522, -18.7], [524, -12.6], [526, -20.4],
  ...cool[1], [550, -15.4], [552, -22],
  ...cool[2], [576, -17.7], [578, -24],
  ...cool[3], [602, -18.9], [604, -25],
  ...cool[4], [628, -18.1], [630, -25],
  ...cool[5], [654, -14.6], [657, -25.9], [663, -26.7],
  ...rise2, [669, 7.4], [671, 4.5], [673, 4.5], [674, 8.2], [676, 8.1], [677, 4.3],
  ...wave(678, 690, 3.3, 4.4, 2.4, 4, 1), ...wave(690, 698, 3.3, 5.6, 2.8),
  ...wave(698, 740, 3.3, 5.4, 2.4, 5.8, 2.4), ...wave(740, 752, 3.3, 6, 2.4), ...wave(752, 764, 3.3, 5.2, 1.9, 4.8, 1.4),
  [766, 5.6], [767, 2], [769, 3], [771, -0.8], [773, 2], [774, 0.2],
  ...wave(775, 828, 2, 2.3, 0.4), ...wave(828, 855, 2, 2.4, 0.5, 3.6, 1.2), ...wave(855, 863, 2, 3.4, 1.4, 5, 2.8),
  [864, 6.6], [865, 3.6],
  ...last, [915, 23.4],
  ...fall3, [931, -19.3],
  ...wave(932, 955, 1.4, -17.3, -18.8), [956, -17], [958, -10.3], [959, -17.2],
  ...wave(960, 964, 1.4, -17.3, -18.8)
];

const smooth = [
  ...start, ...fall1, [147, 11.6], [148, 10.5], [149, 10.5],
  ...drift(150, 179, 11.9, 11.9, 0.5, 6), [181, 11], [184, 10.2], [186, 9.5],
  ...drift(187, 198, 9.6, 9.6, 0.15, 5), ...drift(199, 257, 10.1, 10.1, 0.3, 6.2), [259, 10.8], [262, 11.1],
  ...rise1, ...drift(344, 355, 0.2, 0.4, 0.4, 3), [358, 2], [360, 3.3],
  ...drift(361, 380, 3.4, 3.4, 0.3, 5), ...drift(380, 447, 3.2, 3.2, 0.15, 6), [449, 3.9], [453, 4.1], [454, 2.6],
  ...drift(455, 465, 2.4, 3, 0.2, 4), [470, 3.8], [473, 4.6], [474, 6.7],
  ...fall2, [487, -8.7], [488, -10.7], [489, -11.9], [491, -11.9], [493, -7.1], [494, -9.8], [498, -9.8],
  ...cool[0], [522, -20.6], [526, -20.6],
  ...cool[1], [549, -22], [552, -22],
  ...cool[2], [575, -23.9], [578, -23.9],
  ...cool[3], [601, -25], [604, -25],
  ...cool[4], [627, -24.7], [630, -24.7],
  ...cool[5], [653, -26.4], [656, -26.2], [659, -24.5], [661, -23], [663, -23],
  ...rise2, [670, 4.5], [676, 4.5], [682, 2.8], [685, 2.8], [688, 3.7],
  ...drift(690, 702, 4, 3.8, 0.4, 4), ...drift(702, 752, 4, 4.2, 0.2, 5), [754, 3.7], [762, 3.6], [766, 3.2], [769, 2.2], [772, 1.5], [779, 1.2],
  [794, 1.4], [824, 1.4], [847, 1.9], [855, 2.4], [862, 4], [864, 5],
  ...last, ...fall3, [936, -18.1], [953, -18], [956, -17.2], [959, -17.2], [961, -17.8], [964, -18]
];

function draw() {
  const box = document.getElementById("plot");
  box.innerHTML = "";
  const width = box.clientWidth;
  const height = box.clientHeight;
  const left = 17;
  const right = width - 3;
  const bottom = height - 42;
  const X = s => left + s / STEPS * (right - left);
  const Y = v => (TOP - v) / (TOP - BOTTOM) * bottom;
  const line = points => points.map(([s, v]) => X(s).toFixed(1) + "," + Y(v).toFixed(1)).join(" ");

  let grid = "";
  let labels = "";
  for (let v = 28; v >= -26; v -= 2) {
    const y = Math.round(Y(v)) + 0.5;
    grid += `<path d="M${left + 1} ${y}H${right}"/>`;
    labels += `<text x="12" y="${Math.round(Y(v)) + 3}" text-anchor="end">${v}</text>`;
  }
  for (let h = 3; h < 120; h += 6) {
    const x = Math.round(X(h / 120 * STEPS));
    grid += `<path d="M${x + 0.5} 0V${bottom}"/>`;
    if ((h - 3) % 12 === 0) {
      const day = 15 + Math.floor(h / 24);
      const hour = String(h % 24).padStart(2, "0");
      labels += `<text x="${x}" y="${bottom + 12}" text-anchor="middle">${day}.07.2026</text>`;
      labels += `<text x="${x}" y="${bottom + 20}" text-anchor="middle">${hour}:00:00</text>`;
    }
  }

  box.innerHTML = `
    <svg width="${width}" height="${height}">
      <g class="grid">${grid}</g>
      ${labels}
      <text class="title" transform="translate(20 1) rotate(90)">Температура, °C</text>
      <text class="title" x="${right}" y="${bottom - 2}" text-anchor="end">Час</text>
      <polyline class="series raw" points="${line(raw)}"/>
      <polyline class="series smooth" points="${line(smooth)}"/>
    </svg>`;
}

draw();
window.addEventListener("resize", draw);
```
